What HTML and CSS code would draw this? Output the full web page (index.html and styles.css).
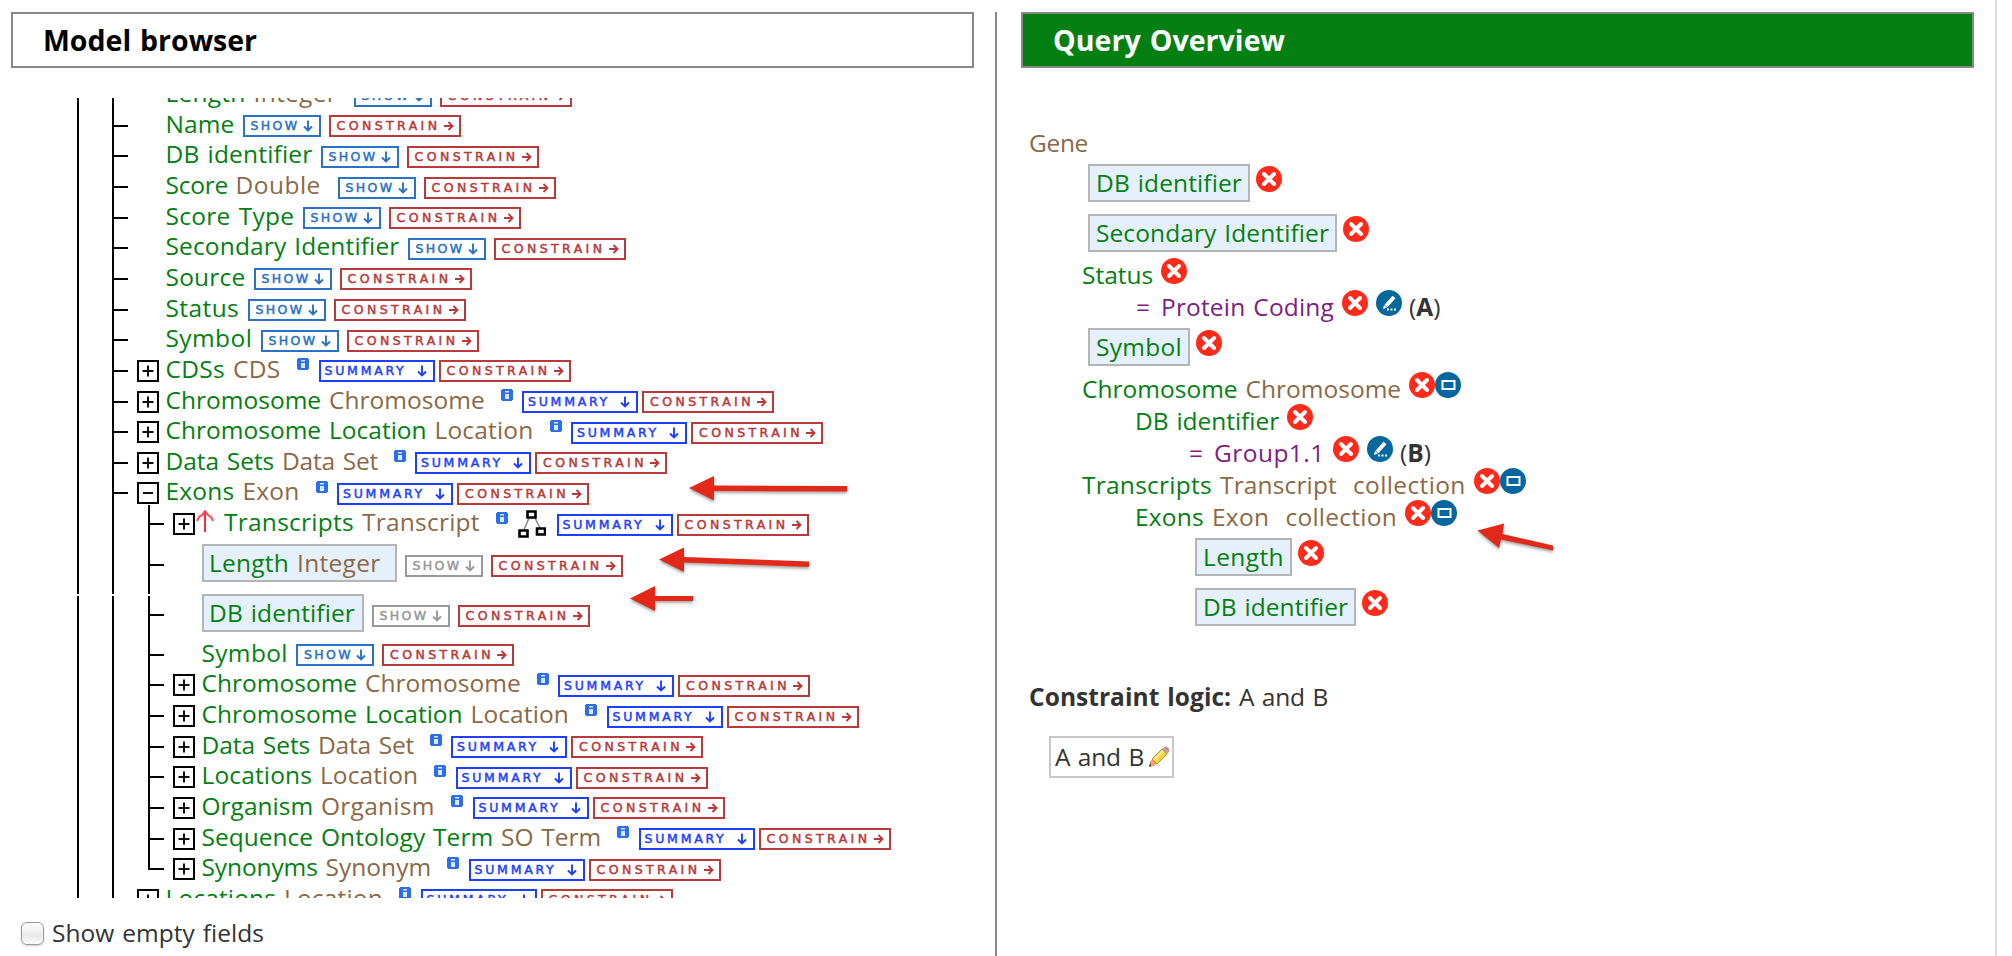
FILE: index.html
```html
<!DOCTYPE html>
<html lang="en">
<head>
<meta charset="utf-8">
<title>Query builder</title>
<link rel="stylesheet" href="styles.css">
</head>
<body>
<svg class="sprites" aria-hidden="true">
  <symbol id="i-plus" viewBox="0 0 22 22"><path d="M1 1h20v20H1z" fill="#fff" stroke="#000" stroke-width="2"/><path d="M5.500 11h11M11 5.500v11" stroke="#111" stroke-width="2"/></symbol>
  <symbol id="i-minus" viewBox="0 0 22 22"><path d="M1 1h20v20H1z" fill="#fff" stroke="#000" stroke-width="2"/><path d="M6 11h10" stroke="#111" stroke-width="2"/></symbol>
  <symbol id="i-info" viewBox="0 0 12 12"><path d="M1 0h10v1h1v10h-1v1H1v-1H0V1h1z" fill="#2d6fe9"/><path d="M4 2h4v1.500H4zM4 5h4v5H4z" fill="#d9e8ff"/></symbol>
  <symbol id="i-up" viewBox="0 0 18 22"><path d="M9 22V1" stroke="#ff2a35" stroke-width="2"/><path d="M1 11l2-4 3-2 3-4 3 4 3 2 2 4" fill="none" stroke="#ff4a52" stroke-width="2"/></symbol>
  <symbol id="i-graph" viewBox="0 0 28 28"><path d="M11 8L6 20M17 8l5 10" stroke="#888" stroke-width="1.500"/><path d="M9.500 1.500h8v6h-8zM1.500 20.500h8v6h-8zM19 18.500h8v6h-8z" fill="#fff" stroke="#000" stroke-width="2.600"/></symbol>
  <symbol id="i-down" viewBox="0 0 10 12"><path d="M5 0.500v10M1 6.500l4 4 4-4" fill="none" stroke="currentColor" stroke-width="1.900"/></symbol>
  <symbol id="i-right" viewBox="0 0 10 12"><path d="M0 6h9M4.500 2l4 4-4 4" fill="none" stroke="currentColor" stroke-width="1.900"/></symbol>
  <symbol id="i-remove" viewBox="0 0 26 26"><circle cx="13" cy="13" r="13" fill="#ff2b1a"/><path d="M8 8l10 10M18 8L8 18" stroke="#fff" stroke-width="4" stroke-linecap="round"/></symbol>
  <symbol id="i-edit" viewBox="0 0 26 26"><circle cx="13" cy="13" r="13" fill="#06679c"/><path d="M18 7l-8 9" stroke="#fff" stroke-width="4"/><path d="M7 19l1-4 3 2.500z" fill="#fff"/><path d="M11 19.500h2M14.500 19.500h2M18 19.500h2" stroke="#fff" stroke-width="2"/></symbol>
  <symbol id="i-join" viewBox="0 0 26 26"><circle cx="13" cy="13" r="13" fill="#06679c"/><path d="M7.500 9h12v8h-12z" fill="none" stroke="#fff" stroke-width="2"/></symbol>
  <symbol id="i-pencil" viewBox="0 0 20 20"><path d="M0 20l1.500-6L5 18.500z" fill="#3a2020"/><path d="M1 15l3-4 5 5-4 3-3 .5z" fill="#f0a070"/><path d="M3 12L13 2l5 5L8 17z" fill="#f6cf3c" stroke="#b98d20"/><path d="M5 13L14 4" stroke="#fff3a0" stroke-width="2"/><path d="M13 2l2-2 5 5-2 2z" fill="#aaa"/><path d="M15 0h3l2 2v3z" fill="#e57070"/></symbol>
</svg>
<div class="page">
  <section class="browser">
    <h2 class="title"><span data-fit="214">Model browser</span></h2>
    <div class="tree" id="tree"></div>
    <label class="empty"><input class="box" type="checkbox"><span data-fit="212">Show empty fields</span></label>
  </section>
  <section class="overview">
    <h2 class="title title-green"><span data-fit="232">Query Overview</span></h2>
    <div class="query" id="query"></div>
    <p class="logic"><b data-fit="210">Constraint logic: </b><span data-fit="89">A and B</span></p>
    <div class="logic-edit"><span data-fit="89">A and B</span><svg class="pencil"><use href="#i-pencil"/></svg></div>
  </section>
  <svg class="arrows" viewBox="0 0 2012 956">
    <path d="M689 488l25-12v9.500l133 .5v5.500l-133-.5v9.500z"/>
    <path d="M659 559.500l25-12v9.500l125 4.500v5.500l-125-4.500v9.500z"/>
    <path d="M630 598.500l25-12.500v10h38v5h-38v10z"/>
    <path d="M1477.500 530.500l26.500-7-1.500 10.500 50.500 11.500v5l-52-11-2 8.500z"/>
  </svg>
</div>
<script src="app.js"></script>
</body>
</html>
```
FILE: styles.css
```css
* { box-sizing: border-box; }
body {
  margin: 0;
  overflow: hidden;
  background: #fff;
  color: #333;
  font: 24.500px/30px "Open Sans", "Noto Sans", sans-serif;
}
svg { display: block; flex: none; overflow: visible; }
.sprites { position: absolute; width: 0; height: 0; }
.page {
  position: relative;
  display: flex;
  width: 1997px;
  height: 956px;
  border-right: 2px solid #ddd;
}
.browser {
  width: 995px;
  padding: 12px 21px 0 11px;
}
.overview {
  flex: 1;
  margin-top: 12px;
  padding-right: 21px;
  padding-left: 24px;
  border-left: 2px solid #888;
}
.title {
  display: flex;
  align-items: center;
  height: 56px;
  margin: 0;
  padding: 0 0 0 30px;
  border: 2px solid #888;
  color: #000;
  font-size: 28.500px;
  font-weight: 700;
}
.title-green { background: #048012; color: #fff; }
[data-fit] { white-space: pre; flex: none; word-spacing: 1.500px; }

/* Model tree */
.tree {
  position: relative;
  height: 800px;
  margin-top: 30px;
  padding-left: 66px;
  overflow: hidden;
}
.tree::after {
  content: "";
  position: absolute;
  top: 496px;
  left: 60px;
  width: 86px;
  height: 2px;
  background: #fff;
}
.row { display: flex; height: 30.650px; white-space: pre; }
.row:first-child { margin-top: -18.400px; }
.row.picked { height: 50px; }
.guide { position: relative; flex: none; width: 35px; border-left: 2px solid #000; }
.guide.wide { width: 36px; }
.guide.tick { width: 25px; }
.guide.tick::after {
  content: "";
  position: absolute;
  top: 14.500px;
  left: 0;
  width: 14px;
  height: 2px;
  background: #000;
}
.picked .guide.tick::after { top: 25px; }
.guide.last { height: 16.500px; }
.guide.first::before {
  content: "";
  position: absolute;
  top: -4px;
  left: -2px;
  width: 2px;
  height: 4px;
  background: #000;
}
.toggle { flex: none; width: 28.500px; padding-top: 4.500px; }
.toggle svg { width: 22px; height: 22px; }
.up { width: 18px; height: 22px; margin: 1px 10.500px 0 -6px; }
.label { display: flex; flex: none; height: 30px; margin-top: -1.500px; }
.name { color: #048012; }
.type { color: #8b6946; }
.chip {
  display: flex;
  flex: none;
  height: 38px;
  border: 2px solid #b5b5b5;
  background: #e6f0fa;
}
.row .chip { margin: 5px 8px 0 0; padding: 2px 0 0 5.500px; }
.info { width: 12px; height: 12px; margin: 3px 9.500px 0 0; }
.graph { width: 28px; height: 28px; margin: 1px 11px 0 0; }
.btn {
  display: flex;
  flex: none;
  align-items: center;
  justify-content: space-between;
  height: 22px;
  margin-top: 5px;
  border: 2px solid;
  font: 700 12.500px/18px "DejaVu Sans", sans-serif;
}
.picked .btn { margin-top: 15.500px; }
.btn svg { width: 10px; height: 12px; }
.show { width: 78px; margin-right: 8px; padding: 0 6px; color: #2b72c4; }
.show.off { color: #999; }
.summary { width: 116px; margin-right: 4px; padding: 0 6px 0 4px; color: #1f3fff; }
.constrain { width: 132px; padding: 0 5px 0 6px; color: #b83a3a; }
.btn span { font-weight: 400; -webkit-text-stroke: .5px currentColor; }
.empty { display: flex; align-items: center; height: 30px; margin-top: 20px; padding-left: 10px; }
.box {
  appearance: none;
  width: 23px;
  height: 23px;
  margin: 1px 8px 0 0;
  border: 1.500px solid #999;
  border-radius: 6px;
  background: linear-gradient(#fff, #eaeaea 60%, #fafafa);
  box-shadow: 0 1px 2px rgba(0, 0, 0, .2);
}

/* Query summary */
.query { padding: 58px 0 0 8px; }
.line { display: flex; height: 32px; white-space: pre; }
.line.picked { height: 50px; padding-top: 6px; }
.line .label { margin-top: 2px; }
.line .chip { margin-right: 6px; padding: 2px 0 0 6px; }
.line .icon { width: 26px; height: 26px; }
.picked .icon { margin-top: 2px; }
.icon.edit { margin: 0 7px 0 8px; }
.value { color: #801c84; }
.logic { display: flex; margin: 50px 0 0 8px; }
.logic-edit {
  display: flex;
  width: 125px;
  height: 42px;
  margin: 24px 0 0 28px;
  padding: 4px 0 0 4px;
  border: 2px solid #c8c8c8;
}
.pencil { width: 20px; height: 20px; margin: 5px 0 0 5px; }
.arrows {
  position: absolute;
  top: 0;
  left: 0;
  width: 2012px;
  height: 956px;
  fill: #e22818;
  filter: drop-shadow(0 2px 1.500px rgba(0, 0, 0, .35));
  pointer-events: none;
}
```
FILE: app.js
```js
// Tree nodes: depth, name, name width, type, type width, options.
const nodes = [
  [1, "Length", 88, "Integer", 100, {}],
  [1, "Name", 77, "", 0, {}],
  [1, "DB identifier", 155, "", 0, {}],
  [1, "Score", 70, "Double", 102, {}],
  [1, "Score Type", 137, "", 0, {}],
  [1, "Secondary Identifier", 242, "", 0, {}],
  [1, "Source", 88, "", 0, {}],
  [1, "Status", 82, "", 0, {}],
  [1, "Symbol", 95, "", 0, {}],
  [1, "CDSs", 67.5, "CDS", 64, { ref: "plus" }],
  [1, "Chromosome", 163.5, "Chromosome", 171.5, { ref: "plus" }],
  [1, "Chromosome Location", 269, "Location", 115, { ref: "plus" }],
  [1, "Data Sets", 116.5, "Data Set", 111.5, { ref: "plus" }],
  [1, "Exons", 77, "Exon", 73, { ref: "minus" }],
  [2, "Transcripts", 138, "Transcript", 134, { ref: "plus", loop: true, first: true }],
  [2, "Length", 88, "Integer", 100, { picked: true }],
  [2, "DB identifier", 153, "", 0, { picked: true }],
  [2, "Symbol", 94.5, "", 0, {}],
  [2, "Chromosome", 163.5, "Chromosome", 171.5, { ref: "plus" }],
  [2, "Chromosome Location", 269, "Location", 114.5, { ref: "plus" }],
  [2, "Data Sets", 116.5, "Data Set", 111.5, { ref: "plus" }],
  [2, "Locations", 118.5, "Location", 114, { ref: "plus" }],
  [2, "Organism", 119.5, "Organism", 130, { ref: "plus" }],
  [2, "Sequence Ontology Term", 299.5, "SO Term", 116, { ref: "plus" }],
  [2, "Synonyms", 124, "Synonym", 121.5, { ref: "plus", last: true }],
  [1, "Locations", 118.5, "Location", 115, { ref: "plus" }],
];

// Query lines: indent, parts as [class, text, width], icons, options.
const lines = [
  [0, [["type", "Gene", 59]], [], {}],
  [59, [["name", "DB identifier", 146]], ["remove"], { picked: 162 }],
  [59, [["name", "Secondary Identifier", 233]], ["remove"], { picked: 249 }],
  [53, [["name", "Status ", 79]], ["remove"], {}],
  [107, [["value", "= ", 25], ["value", "Protein Coding ", 181]], ["remove", "edit"], { code: "A" }],
  [59, [["name", "Symbol", 86]], ["remove"], { picked: 102 }],
  [53, [["name", "Chromosome ", 163.5], ["type", "Chromosome ", 163.5]], ["remove", "join"], {}],
  [106, [["name", "DB identifier ", 152]], ["remove"], {}],
  [160, [["value", "= ", 25], ["value", "Group1.1 ", 119]], ["remove", "edit"], { code: "B" }],
  [53, [["name", "Transcripts ", 138], ["type", "Transcript  ", 133], ["type", "collection ", 121]], ["remove", "join"], {}],
  [106, [["name", "Exons ", 77], ["type", "Exon  ", 73.5], ["type", "collection ", 119.5]], ["remove", "join"], {}],
  [166, [["name", "Length", 81]], ["remove"], { picked: 97 }],
  [166, [["name", "DB identifier", 145]], ["remove"], { picked: 161 }],
];

const icon = (cls, id) => `<svg class="${cls}"><use href="#i-${id}"/></svg>`;
const text = (cls, str, width) => `<span class="${cls}" data-fit="${width}">${str}</span>`;
const button = (cls, word, width, arrow) =>
  `<span class="btn ${cls}">${text("", word, width)}${icon("", arrow)}</span>`;

function nodeRow([depth, name, nameWidth, type, typeWidth, opt]) {
  const guides = depth === 1
    ? `<i class="guide"></i><i class="guide tick"></i>`
    : `<i class="guide"></i><i class="guide wide"></i><i class="guide tick ${opt.first ? "first" : ""} ${opt.last ? "last" : ""}"></i>`;
  const pad = opt.picked && !type ? "" : " ";
  const label = text("name", name + pad, opt.picked && !type ? 146 : nameWidth) +
    (type ? text("type", type + "  ", typeWidth) : "");
  const holder = opt.picked
    ? `<span class="chip" style="width:${type ? 195 : 162}px">${label}</span>`
    : `<span class="label">${label}</span>`;
  return `<div class="row ${opt.picked ? "picked" : ""}">${guides}` +
    `<span class="toggle">${opt.ref ? icon("", opt.ref) : ""}</span>` +
    (opt.loop ? icon("up", "up") : "") + holder +
    (opt.ref ? icon("info", "info") + (opt.loop ? icon("graph", "graph") : "") +
      button("summary", "SUMMARY", 82, "down")
      : button(opt.picked ? "show off" : "show", "SHOW", 49, "down")) +
    button("constrain", "CONSTRAIN", 104, "right") + `</div>`;
}

function queryLine([indent, parts, icons, opt]) {
  const label = parts.map(p => text(...p)).join("");
  return `<div class="line ${opt.picked ? "picked" : ""}" style="padding-left:${indent}px">` +
    (opt.picked ? `<span class="chip" style="width:${opt.picked}px">${label}</span>`
      : `<span class="label">${label}</span>`) +
    icons.map(id => icon("icon " + id, id)).join("") +
    (opt.code ? `<span class="label">(<b>${opt.code}</b>)</span>` : "") + `</div>`;
}

document.getElementById("tree").innerHTML = nodes.map(nodeRow).join("");
document.getElementById("query").innerHTML = lines.map(queryLine).join("");

for (const el of document.querySelectorAll("[data-fit]")) {
  const gap = el.dataset.fit - el.getBoundingClientRect().width;
  el.style.letterSpacing = gap / el.textContent.length + "px";
}
```
